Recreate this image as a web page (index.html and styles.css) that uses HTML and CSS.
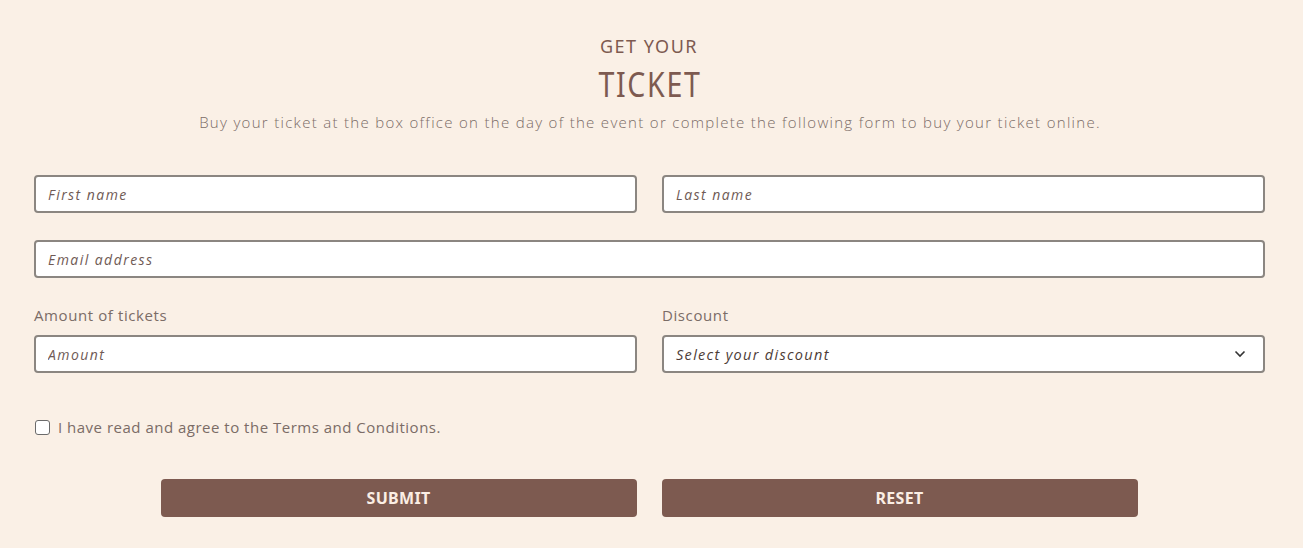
FILE: index.html
```html
<!DOCTYPE html>
<html>
<head>
<meta charset="utf-8">
<link rel="stylesheet" href="styles.css">
</head>
<body>
<section class="ticket">
  <header class="head">
    <div class="pre">GET YOUR</div>
    <h1 class="title">TICKET</h1>
    <p class="lead">Buy your ticket at the box office on the day of the event or complete the following form to buy your ticket online.</p>
  </header>
  <form class="form">
    <div class="row">
      <input class="field" type="text" placeholder="First name">
      <input class="field" type="text" placeholder="Last name">
    </div>
    <div class="row one">
      <input class="field" type="email" placeholder="Email address">
    </div>
    <div class="row labelled">
      <div class="group">
        <label class="label">Amount of tickets</label>
        <input class="field" type="text" placeholder="Amount">
      </div>
      <div class="group">
        <label class="label">Discount</label>
        <div class="select">
          <span>Select your discount</span>
          <svg width="12" height="8" viewBox="0 0 12 8"><path d="M1.5 1.5 L6 6 L10.5 1.5" fill="none" stroke="#333" stroke-width="1.6"/></svg>
        </div>
      </div>
    </div>
    <label class="check">
      <span class="box"></span>
      <span>I have read and agree to the Terms and Conditions.</span>
    </label>
    <div class="buttons">
      <button type="button" class="btn">SUBMIT</button>
      <button type="button" class="btn">RESET</button>
    </div>
  </form>
</section>
</body>
</html>
```
FILE: styles.css
```css
html, body {
  margin: 0;
  padding: 0;
  background: #faf0e6;
}
body {
  font-family: "Open Sans", "Noto Sans", sans-serif;
  color: #7d5a50;
}
.ticket {
  width: 1232px;
  margin-left: 34px;
  padding-top: 34px;
}
.head {
  text-align: center;
}
.pre {
  font-family: "Noto Sans", sans-serif;
  font-size: 18px;
  letter-spacing: 1.5px;
  line-height: 24px;
  color: #7d5a50;
  margin-left: -2px;
}
.title {
  margin: 6px 0 0;
  font-family: "Noto Sans", sans-serif;
  font-weight: 400;
  font-size: 34px;
  letter-spacing: 2px;
  line-height: 40px;
  color: #7d5a50;
  transform: scaleX(0.84);
}
.lead {
  margin: 7px 0 0;
  font-size: 15px;
  letter-spacing: 1.3px;
  font-weight: 300;
  color: #7b6c66;
  line-height: 22px;
}
.form {
  margin-top: 42px;
}
.row {
  display: grid;
  grid-template-columns: 603px 603px;
  column-gap: 25px;
  margin-bottom: 27px;
}
.row.one {
  grid-template-columns: 1231px;
}
.row.labelled {
  margin-top: 18px;
  margin-bottom: 0;
}
.group {
  display: flex;
  flex-direction: column;
}
.label {
  font-size: 15px;
  letter-spacing: 0.6px;
  color: #7b6c66;
  line-height: 20px;
  margin-bottom: 10px;
  font-weight: 400;
}
.field, .select {
  box-sizing: border-box;
  height: 38px;
  width: 100%;
  border: 2px solid #8b8681;
  border-radius: 4px;
  background: #fff;
  padding: 0 12px;
  font-family: "Open Sans", sans-serif;
  font-style: italic;
  font-size: 14px;
  letter-spacing: 1.45px;
  color: #7d5a50;
  outline: none;
}
.field::placeholder {
  color: #6f5a55;
}
.select {
  display: flex;
  align-items: center;
  justify-content: space-between;
  padding-right: 17px;
  color: #4d3c37;
  font-size: 14.5px;
  letter-spacing: 1.3px;
}
.check {
  display: flex;
  align-items: center;
  gap: 8px;
  margin-top: 44px;
  font-size: 15px;
  letter-spacing: 0.5px;
  color: #7b6c66;
  line-height: 20px;
}
.box {
  box-sizing: border-box;
  width: 15px;
  height: 15px;
  border: 1.5px solid #6b6b6b;
  border-radius: 3px;
  background: #fff;
  margin-left: 1px;
}
.buttons {
  display: flex;
  justify-content: center;
  gap: 25px;
  margin-top: 42px;
  padding-right: 2px;
}
.btn {
  width: 476px;
  height: 38px;
  border: none;
  border-radius: 4px;
  background: #7d5a50;
  color: #fbeee4;
  font-family: "Noto Sans", sans-serif;
  font-weight: 700;
  font-size: 16px;
  letter-spacing: 0.3px;
}
```
